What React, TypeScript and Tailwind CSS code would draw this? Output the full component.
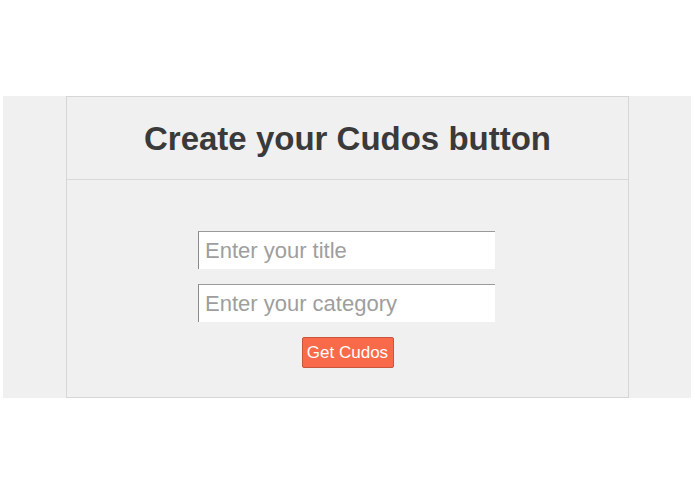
import React from "react";

export default function App() {
  return (
    <div className="min-h-[494px] w-[695px] bg-white pt-[96px]" style={{ fontFamily: '"Liberation Sans", Arial, sans-serif' }}>
      <div className="ml-[3px] w-[688px] bg-[#f0f0f0] pl-[63px]">
        <div className="w-[563px] border border-[#d6d6d6]">
          <div className="flex h-[83px] items-center justify-center border-b border-[#d9d9d9]">
            <h1 className="text-[33px] font-bold leading-none text-[#3a3a3a]">Create your Cudos button</h1>
          </div>
          <div className="flex flex-col items-center pt-[51px] pb-[29px]">
            <input
              className="mr-[2px] h-[38px] w-[297px] border-l border-t border-l-[#8a8a8a] border-t-[#9a9a9a] bg-white px-[6px] text-[22px] text-[#333] outline-none placeholder:text-[#9e9e9e]"
              placeholder="Enter your title"
            />
            <input
              className="mr-[2px] mt-[15px] h-[38px] w-[297px] border-l border-t border-l-[#8a8a8a] border-t-[#9a9a9a] bg-white px-[6px] text-[22px] text-[#333] outline-none placeholder:text-[#9e9e9e]"
              placeholder="Enter your category"
            />
            <button className="mt-[15px] h-[31px] w-[92px] rounded-[2px] border border-[#c9563c] bg-[#f96a4a] text-[17px] text-white">
              Get Cudos
            </button>
          </div>
        </div>
      </div>
    </div>
  );
}
